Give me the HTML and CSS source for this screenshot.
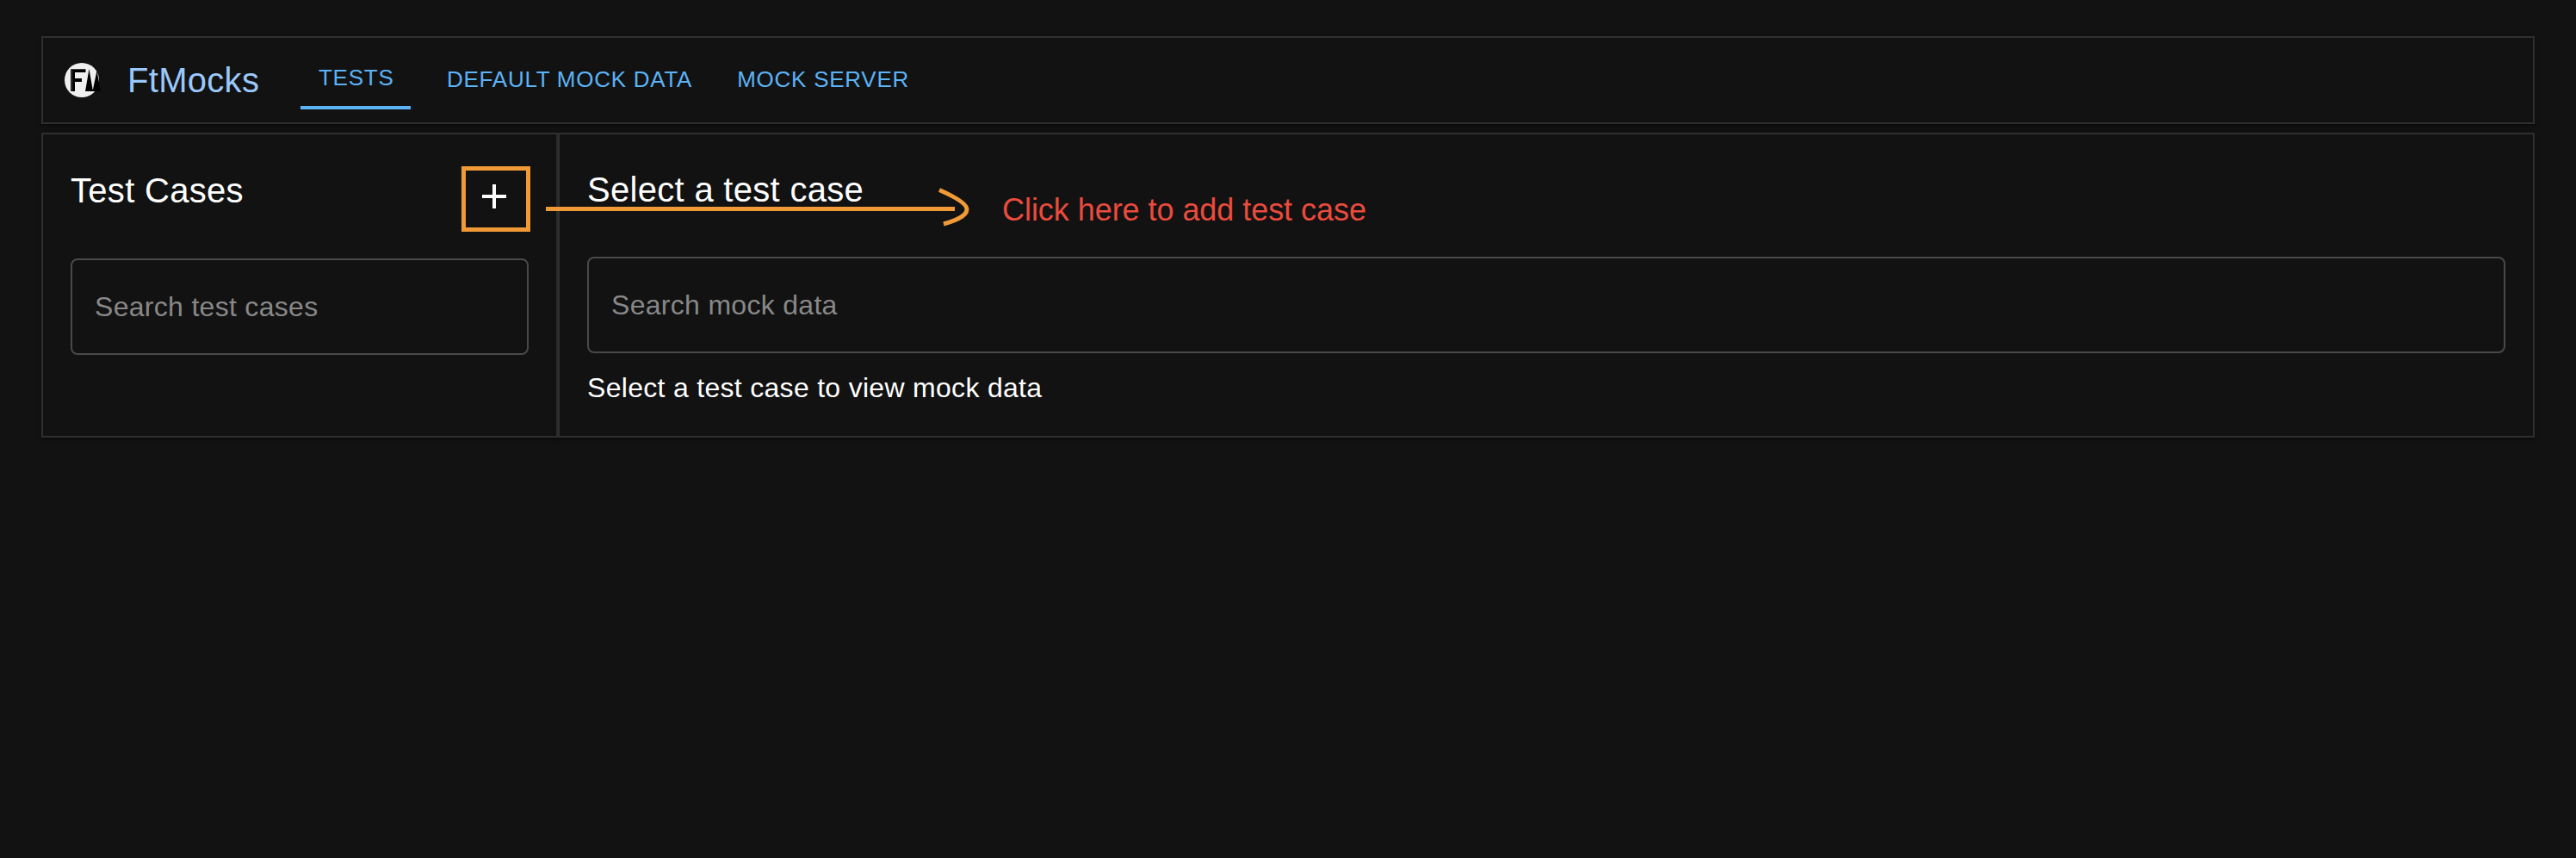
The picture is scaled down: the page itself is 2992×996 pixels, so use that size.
FILE: index.html
```html
<!DOCTYPE html>
<html lang="en">
<head>
<meta charset="utf-8">
<title>FtMocks</title>
<link rel="stylesheet" href="styles.css">
</head>
<body>
<div class="app">
  <header class="paper header">
    <svg class="logo" viewBox="0 0 42 40" aria-label="FtMocks logo">
      <circle cx="20" cy="20" r="20" fill="#efefef"/>
      <path d="M7 7.3H24.500V11H12V18H20V22H12V33H7Z" fill="#000"/>
      <path d="M8.300 7.300V33" stroke="#555" stroke-width="1"/>
      <path d="M24 33L28.500 7L33 33ZM32.500 33L37.500 9L42 33Z" fill="#000"/>
    </svg>
    <h1 class="brand">FtMocks</h1>
    <nav class="tabs">
      <a class="tab active">TESTS</a>
      <a class="tab">DEFAULT MOCK DATA</a>
      <a class="tab">MOCK SERVER</a>
    </nav>
  </header>
  <main class="content">
    <section class="paper cases">
      <div class="cases-head">
        <h2 class="title">Test Cases</h2>
        <button class="add" aria-label="Add test case"><svg viewBox="0 0 28 28"><path d="M14 0V28M0 14H28" stroke="#fff" stroke-width="4"/></svg></button>
      </div>
      <div class="field">Search test cases</div>
    </section>
    <section class="paper detail">
      <h2 class="title">Select a test case</h2>
      <div class="field">Search mock data</div>
      <p class="hint">Select a test case to view mock data</p>
    </section>
  </main>
  <div class="callout">
    <svg class="arrow" viewBox="0 0 494 50"><path d="M0 27.500H475" /><path d="M457 5.500C474 13 489 21.500 489 28C489 35 477 41 462 45"/></svg>
    <span class="note">Click here to add test case</span>
  </div>
</div>
</body>
</html>
```
FILE: styles.css
```css
* { box-sizing: border-box; }
body {
  margin: 0;
  min-height: 996px;
  background: #121212;
  color: #fff;
  font-family: "Liberation Sans", Helvetica, Arial, sans-serif;
}
h1, h2, p { margin: 0; font-weight: 400; }
.app {
  position: relative;
  padding: 42px 48px 0;
  display: flex;
  flex-direction: column;
  gap: 10px;
}
.paper {
  border: 2px solid #2f2f2f;
  background: #121212;
  box-shadow: 0 4px 2px -2px rgba(0,0,0,.2), 0 2px 2px rgba(0,0,0,.14), 0 2px 6px rgba(0,0,0,.12);
}
.header { height: 102px; display: flex; align-items: center; padding-left: 25px; }
.logo { width: 42px; height: 40px; flex: none; }
.brand {
  margin-left: 31px;
  width: 201px;
  font-size: 40px;
  letter-spacing: .0075em;
  line-height: 64px;
  color: #9ac8fb;
}
.tabs { display: flex; align-items: center; }
.tab {
  height: 68px;
  padding: 0 20px;
  font-size: 26px;
  line-height: 66px;
  letter-spacing: .02857em;
  color: #5cb3f6;
  white-space: nowrap;
}
.tab.active { width: 128px; padding-left: 21px; line-height: 62px; border-bottom: 4px solid #5cb3f6; margin-right: 22px; }
.tab + .tab + .tab { margin-left: 12px; }
.content { display: flex; height: 354px; }
.cases { width: 600px; padding: 32px; }
.detail { flex: 1; padding: 32px; }
.title { font-size: 40px; letter-spacing: .0075em; line-height: 64px; }
.cases-head { display: flex; justify-content: space-between; align-items: flex-start; height: 112px; }
.cases-head .title { margin-top: 1px; }
.add {
  width: 80px;
  height: 76px;
  margin: 5px -2px 0 0;
  padding: 16px 0 0 19px;
  border: 5px solid #f09a37;
  background: none;
  display: flex;
  align-items: flex-start;
}
.add svg { display: block; width: 28px; height: 28px; }
.field {
  height: 112px;
  padding: 0 26px;
  border: 2px solid #494949;
  border-radius: 8px;
  font-size: 32px;
  line-height: 108px;
  letter-spacing: .00938em;
  color: #888;
}
.detail .field { margin-top: 46px; }
.hint { margin-top: 16px; font-size: 32px; line-height: 48px; letter-spacing: .00938em; }
/* Annotation laid over both panels */
.callout { position: absolute; left: 634px; top: 213px; display: flex; align-items: center; gap: 36px; }
.arrow { width: 494px; height: 50px; fill: none; stroke: #f09a37; stroke-width: 5; }
.note { padding-top: 6px; margin-bottom: -2px; font-size: 36px; line-height: 50px; letter-spacing: -.05px; color: #ea4b3d; white-space: nowrap; }
```
